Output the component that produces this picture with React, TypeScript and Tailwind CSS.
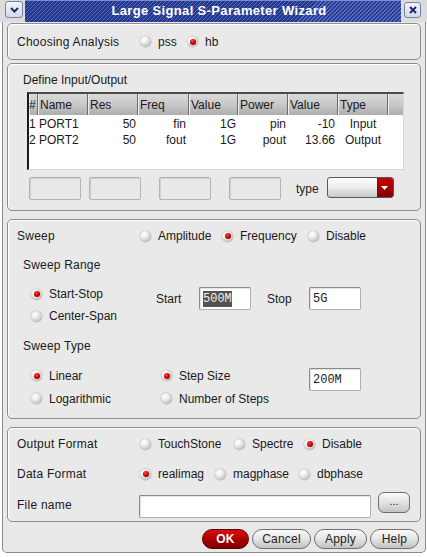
import React from "react";

const font = "font-['Liberation_Sans',Arial,Helvetica,sans-serif]";
const mono = "font-['Liberation_Mono','Courier_New',monospace]";

function Radio({ checked, label, className = "" }: { checked?: boolean; label: string; className?: string }) {
  return (
    <div className={"flex items-center gap-[7px] " + className}>
      <span className="flex h-[11px] w-[11px] shrink-0 items-center justify-center rounded-full bg-[radial-gradient(circle_at_35%_30%,#ffffff_0%,#f0f0f0_30%,#a4a4a4_100%)] shadow-[0_0_0_0.5px_#b4b4b4]">
        {checked && (
          <span className="h-[6px] w-[6px] rounded-full bg-[radial-gradient(circle_at_40%_35%,#ff4a4a_0%,#d40000_45%,#6a0000_100%)]" />
        )}
      </span>
      <span className="leading-none">{label}</span>
    </div>
  );
}

function Field({ children, className = "" }: { children?: React.ReactNode; className?: string }) {
  return (
    <div
      className={
        "flex h-[23px] items-center rounded-[2px] border border-[#b0b0b0] border-t-[#8a8a8a] border-l-[#8a8a8a] bg-white pl-[3px] shadow-[inset_1px_1px_1px_rgba(0,0,0,0.12)] " +
        className
      }
    >
      {children}
    </div>
  );
}

function Disabled({ className = "" }: { className?: string }) {
  return (
    <div className={"h-[23px] w-[52px] rounded-[2px] border border-[#b4b4b4] bg-[#e8e8e8] shadow-[inset_1px_1px_0_#d0d0d0] " + className} />
  );
}

const boxCls =
  "rounded-[5px] border border-[#8e8e8e] bg-[#e9e9e9] shadow-[inset_1px_1px_0_#ffffff]";

const cols = "grid grid-cols-[9px_50px_50px_51px_49px_50px_50px_50px_1fr]";

function PushButton({ children, className = "" }: { children: React.ReactNode; className?: string }) {
  return (
    <div
      className={
        "flex h-[20px] items-center justify-center rounded-full border border-[#6e6e6e] bg-[linear-gradient(#fbfbfb,#e4e4e4_50%,#c2c2c2)] text-[12px] tracking-[0.2px] text-[#222]  " +
        className
      }
    >
      {children}
    </div>
  );
}

export default function App() {
  const headers = ["#", "Name", "Res", "Freq", "Value", "Power", "Value", "Type", ""];
  const rows = [
    ["1", "PORT1", "50", "fin", "1G", "pin", "-10", "Input"],
    ["2", "PORT2", "50", "fout", "1G", "pout", "13.66", "Output"],
  ];
  return (
    <div className={"h-[557px] w-[427px] overflow-hidden bg-white text-[12px] text-[#1a1a1a] " + font}>
      {/* title bar */}
      <div className="flex h-[22px] w-[427px] bg-[#dcdcdc]">
        <div className="flex w-[25px] pl-[5px] pt-[1px]">
          <div className="flex h-[17px] w-[18px] items-center justify-center rounded-[3px] border border-[#7282a6] bg-[linear-gradient(#f2f4fa,#d4daea)]">
            <svg width="9" height="6" viewBox="0 0 9 6">
              <path d="M1 1 L4.5 4.5 L8 1" stroke="#1c2a6a" strokeWidth="2" fill="none" />
            </svg>
          </div>
        </div>
        <div className="flex flex-1 items-center justify-center border-t border-[#7c8ed0] bg-[repeating-linear-gradient(135deg,#566dc2_0px,#566dc2_1.3px,#24378a_1.3px,#24378a_2.83px)] pl-[12px] pb-[1px] text-[13px] font-bold tracking-[0.35px] text-white">
          Large Signal S-Parameter Wizard
        </div>
        <div className="flex w-[26px] pl-[3px] pt-[2px]">
          <div className="flex h-[16px] w-[17px] items-center justify-center rounded-[3px] border border-[#7282a6] bg-[linear-gradient(#f2f4fa,#d4daea)]">
            <svg width="8" height="8" viewBox="0 0 8 8">
              <path d="M1 1 L7 7 M7 1 L1 7" stroke="#1c2a6a" strokeWidth="2" />
            </svg>
          </div>
        </div>
      </div>

      {/* window body */}
      <div className="ml-[2px] flex h-[531px] w-[424px] flex-col rounded-b-[5px] border-x border-b border-[#8a8a8a] bg-[#e8e8e8] pl-[4px] pr-[4px]">
        {/* Choosing Analysis */}
        <div className={"mt-[1px] flex h-[37px] items-center pl-[9px] tracking-[0.25px] " + boxCls}>
          <div className="w-[123px]">Choosing Analysis</div>
          <Radio label="pss" className="w-[47px] tracking-normal" />
          <Radio label="hb" checked className="tracking-normal" />
        </div>

        {/* Define Input/Output */}
        <div className={"mt-[3px] flex h-[148px] flex-col " + boxCls}>
          <div className="flex h-[28px] items-center pl-[15px] pt-[4px]">Define Input/Output</div>
          <div className="ml-[19px] flex h-[78px] w-[377px] flex-col border-t-[2px] border-l-[2px] border-b border-r border-t-[#4a4a4a] border-l-[#1a1a1a] border-b-[#d6d6d6] border-r-[#d6d6d6] bg-white">
            <div className={cols + " h-[21px] bg-[linear-gradient(#dadada,#c8c8c8_50%,#adadad)]"}>
              {headers.map((h, i) => (
                <div
                  key={i}
                  className={
                    "flex items-center border-r border-[#6c6c6c] shadow-[inset_1px_0_0_#ececec] " +
                    (i === 0 ? "pl-0" : "pl-[2px]") +
                    (i === 8 ? " border-r-0" : "")
                  }
                >
                  {h}
                </div>
              ))}
            </div>
            {rows.map((r, ri) => (
              <div key={ri} className={cols + " h-[16px] items-center"}>
                <div>{r[0]}</div>
                <div className="pl-[1px]">{r[1]}</div>
                <div className="pr-[2px] text-right">{r[2]}</div>
                <div className="pr-[3px] text-right">{r[3]}</div>
                <div className="pr-[2px] text-right">{r[4]}</div>
                <div className="pr-[2px] text-right">{r[5]}</div>
                <div className="pr-[3px] text-right">{r[6]}</div>
                <div className="text-center">{r[7]}</div>
                <div />
              </div>
            ))}
          </div>
          <div className="mt-[7px] flex items-start pl-[21px]">
            <Disabled />
            <Disabled className="ml-[8px]" />
            <Disabled className="ml-[18px]" />
            <Disabled className="ml-[18px]" />
            <div className="ml-[15px] flex h-[23px] items-center">type</div>
            <div className="ml-[8px] flex h-[21px] w-[67px] overflow-hidden rounded-[3px] border border-[#585858] bg-[linear-gradient(#ffffff,#ececec_50%,#c8c8c8)]">
              <div className="flex-1" />
              <div className="flex w-[16px] items-center justify-center bg-[linear-gradient(#c80000,#9c0000_60%,#7a0000)]">
                <svg width="7" height="4" viewBox="0 0 7 4">
                  <path d="M0 0 H7 L3.5 4 Z" fill="#ffffff" />
                </svg>
              </div>
            </div>
          </div>
        </div>

        {/* Sweep */}
        <div className={"mt-[8px] flex h-[200px] flex-col " + boxCls}>
          <div className="flex h-[32px] items-center pl-[9px]">
            <div className="w-[123px] tracking-[0.25px]">Sweep</div>
            <Radio label="Amplitude" className="w-[82px]" />
            <Radio label="Frequency" checked className="w-[86px]" />
            <Radio label="Disable" />
          </div>
          <div className="flex h-[26px] items-center pl-[15px] tracking-[0.2px]">Sweep Range</div>
          <div className="flex items-start pl-[23px] pt-[5px]">
            <div className="flex w-[125px] flex-col">
              <div className="flex h-[22px] items-center">
                <Radio label="Start-Stop" checked />
              </div>
              <div className="flex h-[22px] items-center">
                <Radio label="Center-Span" />
              </div>
            </div>
            <div className="mt-[4px] flex items-center">
              <div className="w-[43px]">Start</div>
              <Field className={"w-[52px] " + mono}>
                <span className="bg-[#525252] leading-[16px] text-[#f0f0f0]">500M</span>
              </Field>
              <div className="ml-[16px] w-[42px]">Stop</div>
              <Field className={"w-[52px] " + mono}>5G</Field>
            </div>
          </div>
          <div className="flex h-[37px] items-center pl-[15px] tracking-[0.2px]">Sweep Type</div>
          <div className="flex items-start pl-[23px]">
            <div className="flex w-[130px] flex-col">
              <div className="flex h-[23px] items-center">
                <Radio label="Linear" checked />
              </div>
              <div className="flex h-[23px] items-center">
                <Radio label="Logarithmic" />
              </div>
            </div>
            <div className="flex w-[148px] flex-col">
              <div className="flex h-[23px] items-center">
                <Radio label="Step Size" checked />
              </div>
              <div className="flex h-[23px] items-center">
                <Radio label="Number of Steps" />
              </div>
            </div>
            <Field className={"mt-[4px] w-[52px] " + mono}>200M</Field>
          </div>
        </div>

        {/* Output */}
        <div className={"mt-[8px] flex h-[95px] flex-col " + boxCls}>
          <div className="flex h-[32px] items-center pl-[9px]">
            <div className="w-[123px] tracking-[0.25px]">Output Format</div>
            <Radio label="TouchStone" className="w-[94px]" />
            <Radio label="Spectre" className="w-[70px]" />
            <Radio label="Disable" checked />
          </div>
          <div className="flex h-[28px] items-center pl-[9px]">
            <div className="w-[123px] tracking-[0.25px]">Data Format</div>
            <Radio label="realimag" checked className="w-[75px]" />
            <Radio label="magphase" className="w-[84px]" />
            <Radio label="dbphase" />
          </div>
          <div className="flex items-start pl-[9px]">
            <div className="mt-[5px] flex h-[23px] w-[122px] items-center tracking-[0.25px]">File name</div>
            <Field className="mt-[7px] w-[232px]" />
            <div className="ml-[7px] mt-[4px] flex h-[21px] w-[32px] items-center justify-center rounded-[6px] border border-[#6e6e6e] bg-[linear-gradient(#fbfbfb,#e2e2e2_50%,#c4c4c4)] pb-[3px] text-[11px]">
              ...
            </div>
          </div>
        </div>

        {/* buttons */}
        <div className="mt-[7px] flex justify-end pr-[2px]">
          <div className="flex h-[20px] w-[47px] items-center justify-center rounded-full border border-[#5a0000] bg-[linear-gradient(#d81010,#a80000_55%,#7c0000)] text-[12px] font-bold tracking-[0.3px] text-white">
            OK
          </div>
          <PushButton className="ml-[3px] w-[59px]">Cancel</PushButton>
          <PushButton className="ml-[3px] w-[53px]">Apply</PushButton>
          <PushButton className="ml-[3px] w-[49px]">Help</PushButton>
        </div>
      </div>
    </div>
  );
}
